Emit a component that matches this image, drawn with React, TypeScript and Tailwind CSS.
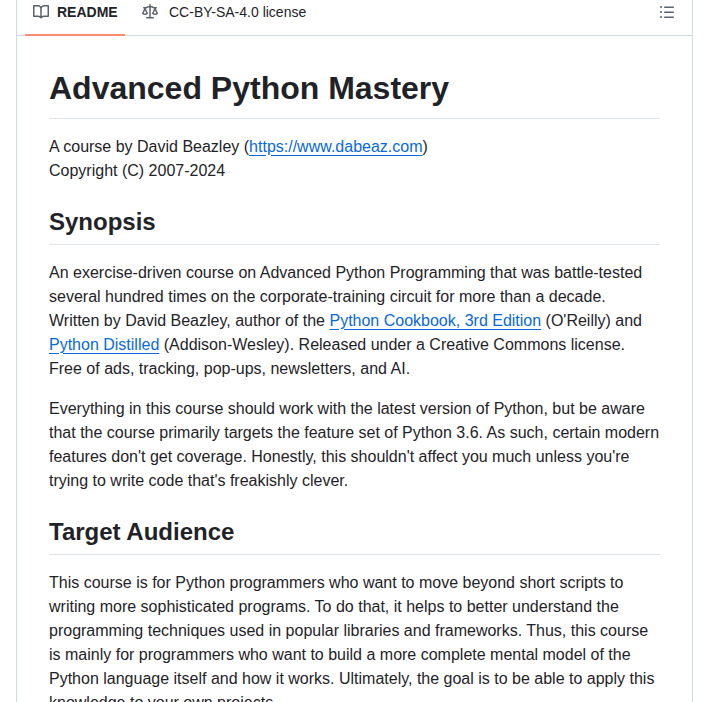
const BOOK = "M0 1.75A.75.75 0 0 1 .75 1h4.253c1.227 0 2.317.59 3 1.501A3.743 3.743 0 0 1 11.006 1h4.245a.75.75 0 0 1 .75.75v10.5a.75.75 0 0 1-.75.75h-4.507a2.25 2.25 0 0 0-1.591.659l-.622.621a.75.75 0 0 1-1.06 0l-.622-.621A2.25 2.25 0 0 0 5.258 13H.75a.75.75 0 0 1-.75-.75Zm7.251 10.324.004-5.073-.002-2.253A2.25 2.25 0 0 0 5.003 2.5H1.5v9h3.757a3.75 3.75 0 0 1 1.994.574ZM8.755 4.75l-.004 7.322a3.752 3.752 0 0 1 1.992-.572H14.5v-9h-3.495a2.25 2.25 0 0 0-2.25 2.25Z";
const LAW = "M8.75.75V2h.985c.304 0 .603.08.867.231l1.29.736c.038.022.08.033.124.033h2.234a.75.75 0 0 1 0 1.5h-.427l2.111 4.692a.75.75 0 0 1-.154.838l-.53-.53.529.531-.001.002-.002.002-.006.006-.006.005-.01.01-.045.04c-.21.176-.441.327-.686.45C14.556 10.78 13.88 11 13 11a4.498 4.498 0 0 1-2.023-.454 3.544 3.544 0 0 1-.686-.45l-.045-.04-.016-.015-.006-.006-.004-.004v-.001a.75.75 0 0 1-.154-.838L12.178 4.5h-.162c-.305 0-.604-.079-.868-.231l-1.29-.736a.245.245 0 0 0-.124-.033H8.75V13h2.5a.75.75 0 0 1 0 1.5h-6.5a.75.75 0 0 1 0-1.5h2.5V3.5h-.984a.245.245 0 0 0-.124.033l-1.289.737c-.265.15-.564.23-.869.23h-.162l2.112 4.692a.75.75 0 0 1-.154.838l-.53-.53.529.531-.001.002-.002.002-.006.006-.016.015-.045.04c-.21.176-.441.327-.686.45C4.556 10.78 3.88 11 3 11a4.498 4.498 0 0 1-2.023-.454 3.544 3.544 0 0 1-.686-.45l-.045-.04-.016-.015-.006-.006-.004-.004v-.001a.75.75 0 0 1-.154-.838L2.178 4.5H1.75a.75.75 0 0 1 0-1.5h2.234a.249.249 0 0 0 .125-.033l1.288-.737c.265-.15.564-.23.869-.23h.984V.75a.75.75 0 0 1 1.5 0Zm2.945 8.477c.285.135.718.273 1.305.273s1.02-.138 1.305-.273L13 6.327Zm-10 0c.285.135.718.273 1.305.273s1.02-.138 1.305-.273L3 6.327Z";
const LIST = "M5.75 2.5h8.5a.75.75 0 0 1 0 1.5h-8.5a.75.75 0 0 1 0-1.5Zm0 5h8.5a.75.75 0 0 1 0 1.5h-8.5a.75.75 0 0 1 0-1.5Zm0 5h8.5a.75.75 0 0 1 0 1.5h-8.5a.75.75 0 0 1 0-1.5ZM2 14a1 1 0 1 1 0-2 1 1 0 0 1 0 2Zm1-6a1 1 0 1 1-2 0 1 1 0 0 1 2 0ZM2 4a1 1 0 1 1 0-2 1 1 0 0 1 0 2Z";

function Octicon({ d }: { d: string }) {
  return (
    <svg width="16" height="16" viewBox="0 0 16 16" fill="#59636e" className="shrink-0">
      <path d={d} />
    </svg>
  );
}

function A({ children }: { children: React.ReactNode }) {
  return (
    <a href="#" className="text-[#0969da] underline underline-offset-[3.2px]">
      {children}
    </a>
  );
}

function H2({ children }: { children: React.ReactNode }) {
  return (
    <h2 className="mt-6 mb-4 text-2xl leading-[30px] font-semibold pb-[7.2px] border-b border-[#d1d9e0b3]">
      {children}
    </h2>
  );
}

export default function App() {
  return (
    <div className="h-[702px] overflow-hidden bg-white px-4 text-[#1f2328] font-['Liberation_Sans',Arial,sans-serif]">
      <div className="w-[677px] h-[702px] border-x border-[#d1d9e0]">
        <nav className="h-9 flex items-start justify-between border-b border-[#d1d9e0] pl-2 pr-[17px]">
          <div className="flex items-start gap-[9px]">
            <div className="h-9 w-[100px] flex items-start gap-2 pl-2 pt-1 border-b-2 border-[#fd8c73] text-sm">
              <Octicon d={BOOK} />
              <span className="font-semibold leading-4">README</span>
            </div>
            <div className="h-9 flex items-start gap-[11px] pl-2 pt-1 text-sm">
              <Octicon d={LAW} />
              <span className="leading-4">CC-BY-SA-4.0 license</span>
            </div>
          </div>
          <div className="pt-1">
            <Octicon d={LIST} />
          </div>
        </nav>
        <article className="px-8 pt-8 text-base leading-6">
          <h1 className="mb-4 text-[32px] leading-10 font-semibold pb-[9.6px] border-b border-[#d1d9e0b3]">
            Advanced Python Mastery
          </h1>
          <p className="mb-4">
            A course by David Beazley (<A>https://www.dabeaz.com</A>)
            <br />
            Copyright (C) 2007-2024
          </p>
          <H2>Synopsis</H2>
          <p className="mb-4">
            An exercise-driven course on Advanced Python Programming that was battle-tested several hundred times on
            the corporate-training circuit for more than a decade. Written by David Beazley, author of the{" "}
            <A>Python Cookbook, 3rd Edition</A> (O'Reilly) and <A>Python Distilled</A> (Addison-Wesley). Released under
            a Creative Commons license. Free of ads, tracking, pop-ups, newsletters, and AI.
          </p>
          <p className="mb-4">
            Everything in this course should work with the latest version of Python, but be aware that the course
            primarily targets the feature set of Python 3.6. As such, certain modern features don't get coverage.
            Honestly, this shouldn't affect you much unless you're trying to write code that's freakishly clever.
          </p>
          <H2>Target Audience</H2>
          <p className="mb-4">
            This course is for Python programmers who want to move beyond short scripts to writing more sophisticated
            programs. To do that, it helps to better understand the programming techniques used in popular libraries and
            frameworks. Thus, this course is mainly for programmers who want to build a more complete mental model of
            the Python language itself and how it works. Ultimately, the goal is to be able to apply this knowledge to
            your own projects.
          </p>
        </article>
      </div>
    </div>
  );
}
